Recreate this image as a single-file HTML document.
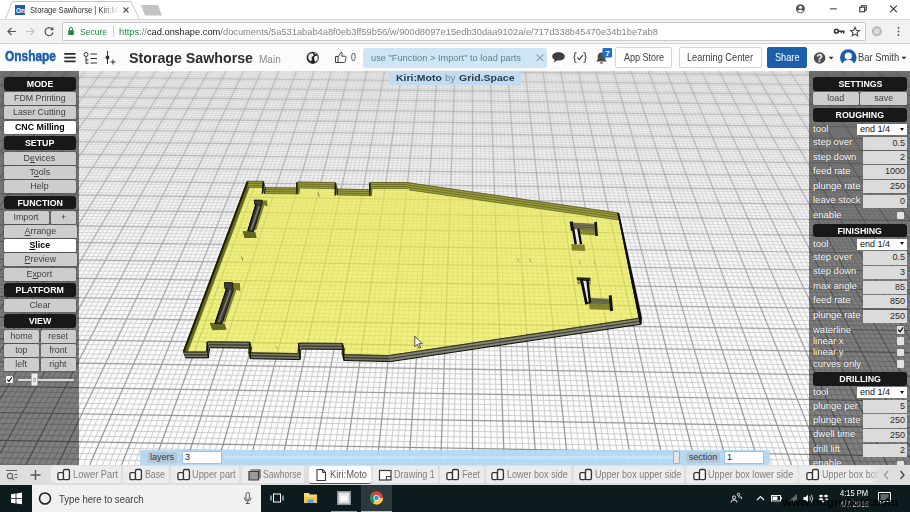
<!DOCTYPE html>
<html>
<head>
<meta charset="utf-8">
<title>Storage Sawhorse | Kiri:Moto</title>
<style>
html,body{margin:0;padding:0;}
body{width:910px;height:512px;overflow:hidden;position:relative;background:#fff;font-family:"Liberation Sans",sans-serif;}
.abs{position:absolute;}
/* ---------- browser chrome ---------- */
#tabstrip{left:0;top:0;width:910px;height:19px;background:#fff;}
#toolbar{left:0;top:19px;width:910px;height:25px;background:#f2f2f2;border-top:1px solid #d8d8d8;border-bottom:1px solid #d4d4d4;box-sizing:border-box;}
#urlbox{left:62px;top:22px;width:804px;height:19px;background:#fff;border:1px solid #c9c9c9;border-radius:2px;box-sizing:border-box;}
.url{left:79px;top:25px;font-size:10.5px;line-height:13px;white-space:nowrap;color:#8a8a8a;letter-spacing:-0.1px;}
/* ---------- onshape header ---------- */
#oshead{left:0;top:44px;width:910px;height:26px;background:#fcfcfc;}
.obtn{top:47px;height:21px;box-sizing:border-box;border:1px solid #d5d5d5;border-radius:2px;background:#fff;color:#444;font-size:10px;line-height:19px;text-align:center;white-space:nowrap;}
/* ---------- viewport ---------- */
#view{left:0;top:70px;width:910px;height:395px;background:#fff;overflow:hidden;}
.panel{background:rgba(0,0,0,0.50);}
.hd{position:absolute;background:#181818;border-radius:3px;color:#fff;font-weight:bold;font-size:9.4px;text-align:center;height:13.8px;line-height:14.2px;letter-spacing:0;}
.bt{position:absolute;background:#cdcdcd;border-radius:1.5px;color:#404040;font-size:9.2px;text-align:center;height:13px;line-height:13.1px;margin-top:-0.15px;box-shadow:0 0 0 0.5px rgba(60,60,60,0.55);}
.bt.sel{background:#fff;color:#000;}
.sx{display:inline-block;transform-origin:50% 50%;}
.lb{position:absolute;left:813px;color:#fff;font-size:9.5px;line-height:12px;white-space:nowrap;text-shadow:0 0 1px #333;}
.in{position:absolute;left:863px;width:44px;height:13.3px;background:#dbdbdb;color:#2a2a2a;font-size:9px;line-height:13.6px;text-align:right;box-sizing:border-box;padding-right:2px;}
.sl{position:absolute;left:857px;width:49.7px;height:11px;background:#fff;color:#111;font-size:9px;line-height:11.2px;box-sizing:border-box;padding-left:3px;}
.cb{position:absolute;left:897px;width:7.4px;height:7.4px;background:#e2e2e2;border-radius:1px;}
/* ---------- onshape tab bar ---------- */
#ostabs{left:0;top:465px;width:910px;height:20px;background:#dedede;}
.ot{position:absolute;top:466.3px;height:16.6px;background:#ececec;border-radius:2.5px;color:#767676;font-size:10.5px;line-height:18px;white-space:nowrap;box-sizing:border-box;}
.ot span{position:absolute;top:0;}
/* ---------- taskbar ---------- */
#taskbar{left:0;top:485px;width:910px;height:27px;background:#0b1b1e;}
</style>
</head>
<body>

<!-- ================= BROWSER TAB STRIP ================= -->
<div id="tabstrip" class="abs"></div>
<svg class="abs" style="left:0;top:0" width="910" height="20" viewBox="0 0 910 20">
  <path d="M0 19.5H5.5L12 1.5H131L139.5 19.5H910" fill="none" stroke="#c8c8c8" stroke-width="1"/>
  <path d="M141 5H158L162 15.5H145Z" fill="#c4c4c4"/>
  <rect x="15" y="5" width="10" height="10" fill="#1b5faa"/>
  <text x="16" y="12.8" font-size="6.5" font-weight="bold" fill="#fff" font-family="Liberation Sans">On.</text>
  <path d="M123.5 7.5L128.5 12.5M128.5 7.5L123.5 12.5" stroke="#555" stroke-width="1.1"/>
  <!-- window controls -->
  <circle cx="800.4" cy="8.7" r="4.5" fill="#5a5a5a"/>
  <circle cx="800.4" cy="7.3" r="1.5" fill="#fff"/><path d="M797.4 11.3Q800.4 8.2 803.4 11.3Q800.4 13.6 797.4 11.3Z" fill="#fff"/>
  <path d="M829.9 8.8H836.8" stroke="#5a5a5a" stroke-width="1.2"/>
  <rect x="859.8" y="7.2" width="4.8" height="4.6" fill="none" stroke="#333" stroke-width="1.1"/>
  <path d="M861.5 7V5.7H866.3V10.3H865" fill="none" stroke="#333" stroke-width="1.1"/>
  <path d="M890.2 5.6L896.8 12.2M896.8 5.6L890.2 12.2" stroke="#333" stroke-width="1.1"/>
</svg>
<div class="abs" style="left:104px;top:2px;width:18px;height:16px;background:linear-gradient(90deg,rgba(255,255,255,0),#fff 80%);"></div>

<!-- ================= TOOLBAR ================= -->
<div id="toolbar" class="abs"></div>
<div id="urlbox" class="abs"></div>
<svg class="abs" style="left:0;top:19px" width="910" height="25" viewBox="0 19 910 25">
  <path d="M16 31.5H8M11.5 28L8 31.5L11.5 35" fill="none" stroke="#555" stroke-width="1.2"/>
  <path d="M26 31.5H34M30.5 28L34 31.5L30.5 35" fill="none" stroke="#c4c4c4" stroke-width="1.2"/>
  <path d="M52.3 29.2A4 4 0 1 0 53 32.5" fill="none" stroke="#555" stroke-width="1.2"/>
  <path d="M53.4 26.8V30.2H50" fill="#555"/>
  <!-- lock -->
  <rect x="68.2" y="30.3" width="5.6" height="4.7" rx="0.6" fill="#1a8a3c"/>
  <path d="M69.4 30.5V29A1.6 1.6 0 0 1 72.6 29V30.5" fill="none" stroke="#1a8a3c" stroke-width="1"/>
  <path d="M113.5 26V37" stroke="#cfcfcf" stroke-width="1"/>
  <!-- key -->
  <circle cx="836.4" cy="31.2" r="1.9" fill="none" stroke="#333" stroke-width="1.5"/>
  <path d="M838.2 31.2H843.8V33.6M841.4 31.2V33.2" fill="none" stroke="#333" stroke-width="1.5"/>
  <!-- star -->
  <path d="M855 27.2L856.3 30.2L859.5 30.5L857.1 32.6L857.8 35.8L855 34.1L852.2 35.8L852.9 32.6L850.5 30.5L853.7 30.2Z" fill="none" stroke="#444" stroke-width="1.1"/>
  <!-- ext -->
  <circle cx="876.8" cy="31.3" r="5" fill="#b9b9b9"/><circle cx="876.8" cy="31.3" r="3" fill="#dcdcdc"/>
  <circle cx="898.5" cy="28" r="0.9" fill="#555"/><circle cx="898.5" cy="31.5" r="0.9" fill="#555"/><circle cx="898.5" cy="35" r="0.9" fill="#555"/>
</svg>
<div class="abs" style="left:79.70px;top:25.91px;font-size:9.60px;line-height:11.52px;font-weight:normal;color:#1a8a3c;white-space:nowrap;transform:scaleX(0.8913);transform-origin:0 0;">Secure</div>
<div class="abs" style="left:118.70px;top:25.91px;font-size:9.60px;line-height:11.52px;font-weight:normal;color:#858585;white-space:nowrap;transform:scaleX(0.9696);transform-origin:0 0;"><span style="color:#1a8a3c">https</span>://<span style="color:#222">cad.onshape.com</span>/documents/5a531abab4a8f0eb3ff59b56/w/900d8097e15edb30daa9102a/e/717d338b45470e34b1be7ab8</div>

<!-- ================= ONSHAPE HEADER ================= -->
<div id="oshead" class="abs"></div>
<svg class="abs" style="left:0;top:44px" width="910" height="26" viewBox="0 44 910 26">
  <path d="M64.3 53.9H75.6M64.3 57.6H75.6M64.3 61.4H75.6" stroke="#2a2a2a" stroke-width="1.8"/>
  <!-- tree icon -->
  <circle cx="86" cy="54.5" r="2" fill="none" stroke="#333" stroke-width="1"/>
  <path d="M86 56.5V63.5M86 60H88.5M86 63.2H88.5M90.5 54H97M90.5 58.5H97M90.5 63H97" fill="none" stroke="#333" stroke-width="1"/>
  <!-- feature icon -->
  <path d="M107.5 51V64" stroke="#333" stroke-width="1"/><circle cx="107.5" cy="57.5" r="1.9" fill="#333"/>
  <path d="M110.5 62H115.5M113 59.5V64.5" stroke="#333" stroke-width="1"/>
  <!-- globe -->
  <circle cx="312.7" cy="57.8" r="6.1" fill="#262626"/>
  <path d="M308.6 55Q310.5 52.8 313 53.4L313.8 55.5L311.5 57L312 59.8L310.3 61.6L308.2 58.2Z M314.6 56.2L317.4 55.6L317.8 59.5L315.5 62L314 59Z M314.2 52.6L316.4 53.6L315.2 54.6Z" fill="#f4f4f4"/>
  <!-- thumbs up -->
  <path d="M335.5 56.5H338V62.5H335.5ZM338 57L341 52.3Q342.6 52.4 342.2 54.2L341.7 56.2H345.3Q346.3 56.4 346.1 57.6L345.1 61.6Q344.8 62.5 343.8 62.5H338" fill="none" stroke="#444" stroke-width="1"/>
  <!-- chat bubble -->
  <path d="M558.5 52.3C562.2 52.3 564.8 54 564.8 56.4C564.8 58.8 562.2 60.5 558.5 60.5C557.9 60.5 557.3 60.5 556.8 60.4L553.8 62.6L554.6 59.6C553 58.9 552.2 57.8 552.2 56.4C552.2 54 554.8 52.3 558.5 52.3Z" fill="#3d3d3d"/>
  <!-- {check} -->
  <path d="M576.5 52.5Q574.7 52.5 574.7 54.3V56Q574.7 57.5 573.4 57.5Q574.7 57.5 574.7 59V60.7Q574.7 62.5 576.5 62.5M583.5 52.5Q585.3 52.5 585.3 54.3V56Q585.3 57.5 586.6 57.5Q585.3 57.5 585.3 59V60.7Q585.3 62.5 583.5 62.5" fill="none" stroke="#444" stroke-width="1.1"/>
  <path d="M577.3 57.6L579.3 59.7L582.8 55.2" fill="none" stroke="#444" stroke-width="1.2"/>
  <!-- bell -->
  <path d="M601.5 52.5C604 52.5 605.3 54.3 605.3 56.8V59.6L606.8 61.4H596.2L597.7 59.6V56.8C597.7 54.3 599 52.5 601.5 52.5Z" fill="#4a4a4a"/>
  <path d="M600 62.2H603A1.5 1.5 0 0 1 600 62.2Z" fill="#4a4a4a"/>
  <rect x="602.5" y="48" width="9.5" height="9.5" rx="1.2" fill="#1f6fc4"/>
  <text x="605.2" y="55.8" font-size="8" font-weight="bold" fill="#fff" font-family="Liberation Sans">7</text>
  <!-- help -->
  <circle cx="819.6" cy="58" r="5.8" fill="#505050"/>
  <text x="816.6" y="61.6" font-size="10" font-weight="bold" fill="#fff" font-family="Liberation Sans">?</text>
  <path d="M828.6 56.8H833.6L831.1 59.6Z" fill="#333"/>
  <!-- avatar -->
  <circle cx="848.3" cy="57.5" r="8.3" fill="#1b5faa"/>
  <circle cx="848.3" cy="56" r="3.6" fill="#fff"/>
  <path d="M842.2 65.8Q842.6 60 848.3 60Q854 60 854.4 65.8Z" fill="#fff"/>
  <path d="M901.5 56.8H906.5L904 59.6Z" fill="#333"/>
</svg>
<div class="abs" style="left:29px;top:2px;width:91px;height:16px;overflow:hidden;-webkit-mask-image:linear-gradient(90deg,#000 80%,rgba(0,0,0,0) 99%);mask-image:linear-gradient(90deg,#000 80%,rgba(0,0,0,0) 99%);"><div class="abs" style="left:0.70px;top:2.60px;font-size:9.30px;line-height:11.16px;font-weight:normal;color:#2e2e2e;white-space:nowrap;transform:scaleX(0.8141);transform-origin:0 0;">Storage Sawhorse | Kiri:Moto</div></div>
<div class="abs" style="left:4.60px;top:47.41px;font-size:15.20px;line-height:18.24px;font-weight:bold;color:#1b5faa;white-space:nowrap;transform:scaleX(0.7846);transform-origin:0 0;-webkit-text-stroke:0.55px #1b5faa;">Onshape</div>
<div class="abs" style="left:128.60px;top:50.17px;font-size:14.40px;line-height:17.28px;font-weight:bold;color:#2e2e2e;white-space:nowrap;transform:scaleX(0.9876);transform-origin:0 0;">Storage Sawhorse</div>
<div class="abs" style="left:259.10px;top:53.94px;font-size:10.00px;line-height:12.00px;font-weight:normal;color:#8c8c8c;white-space:nowrap;transform:scaleX(1.0052);transform-origin:0 0;">Main</div>
<div class="abs" style="left:351.10px;top:51.55px;font-size:10.20px;line-height:12.24px;font-weight:normal;color:#444;white-space:nowrap;transform:scaleX(0.8639);transform-origin:0 0;">0</div>
<div class="abs" style="left:363.3px;top:48.3px;width:183.5px;height:19.5px;background:#cfe5f4;border-radius:3px;"></div>
<div class="abs" style="left:370.80px;top:52.03px;font-size:9.90px;line-height:11.88px;font-weight:normal;color:#5c7f99;white-space:nowrap;transform:scaleX(0.9381);transform-origin:0 0;">use "Function &gt; Import" to load parts</div>
<svg class="abs" style="left:534.5px;top:53px" width="10" height="10"><path d="M1.5 1.6L8.3 7.8M8.3 1.6L1.5 7.8" stroke="#7ea0b8" stroke-width="1.1"/></svg>
<div class="abs obtn" style="left:614.7px;width:57.7px;"></div>
<div class="abs obtn" style="left:678.7px;width:83px;"></div>
<div class="abs obtn" style="left:767px;width:40px;background:#1b5faa;border-color:#1b5faa;"></div>
<div class="abs" style="left:624.00px;top:50.97px;font-size:10.60px;line-height:12.72px;font-weight:normal;color:#3d3d3d;white-space:nowrap;transform:scaleX(0.8509);transform-origin:0 0;">App Store</div>
<div class="abs" style="left:686.60px;top:50.97px;font-size:10.60px;line-height:12.72px;font-weight:normal;color:#3d3d3d;white-space:nowrap;transform:scaleX(0.8686);transform-origin:0 0;">Learning Center</div>
<div class="abs" style="left:774.80px;top:50.97px;font-size:10.60px;line-height:12.72px;font-weight:normal;color:#fff;white-space:nowrap;transform:scaleX(0.8663);transform-origin:0 0;">Share</div>
<div class="abs" style="left:858.40px;top:50.97px;font-size:10.60px;line-height:12.72px;font-weight:normal;color:#3d3d3d;white-space:nowrap;transform:scaleX(0.8857);transform-origin:0 0;">Bar Smith</div>

<!-- ================= VIEWPORT ================= -->
<div id="view" class="abs">
<svg class="abs" style="left:0;top:0" width="910" height="395" viewBox="0 70 910 395">
  <defs>
    <linearGradient id="gm" gradientUnits="userSpaceOnUse" x1="0" y1="70" x2="0" y2="465"><stop offset="0" stop-color="#d0d0d0"/><stop offset="1" stop-color="#c8c8c8"/></linearGradient>
    <linearGradient id="gM" gradientUnits="userSpaceOnUse" x1="0" y1="70" x2="0" y2="465"><stop offset="0" stop-color="#a8a8a8"/><stop offset="1" stop-color="#8a8a8a"/></linearGradient>
  </defs>
  <defs>
    <filter id="bl" x="0" y="70" width="910" height="395" filterUnits="userSpaceOnUse"><feGaussianBlur stdDeviation="0.9"/></filter>
    <filter id="bl2" x="0" y="70" width="910" height="395" filterUnits="userSpaceOnUse"><feGaussianBlur stdDeviation="0.3"/></filter>
    <linearGradient id="mg" gradientUnits="userSpaceOnUse" x1="0" y1="70" x2="0" y2="465"><stop offset="0" stop-color="#585858"/><stop offset="0.3" stop-color="#868686"/><stop offset="1" stop-color="#e8e8e8"/></linearGradient>
    <mask id="mk" maskUnits="userSpaceOnUse" x="0" y="70" width="910" height="395"><rect x="0" y="70" width="910" height="395" fill="url(#mg)"/></mask>
    <g id="grid">
      <path d="M861.3 70.0L910.0 70.5M671.8 70.0L910.0 72.3M482.3 70.0L910.0 74.1M103.3 70.0L910.0 77.9M0.0 70.8L910.0 79.7M0.0 72.7L910.0 81.6M0.0 74.6L910.0 83.5M0.0 78.4L910.0 87.4M0.0 80.3L910.0 89.4M0.0 82.2L910.0 91.3M0.0 84.2L910.0 93.3M0.0 88.1L910.0 97.4M0.0 90.1L910.0 99.4M0.0 92.2L910.0 101.4M0.0 94.2L910.0 103.5M0.0 98.3L910.0 107.7M0.0 100.4L910.0 109.8M0.0 102.5L910.0 111.9M0.0 104.6L910.0 114.1M-0.0 108.9L910.0 118.5M0.0 111.0L910.0 120.7M0.0 113.2L910.0 122.9M0.0 115.4L910.0 125.1M0.0 119.9L910.0 129.7M0.0 122.1L910.0 132.0M0.0 124.4L910.0 134.3M-0.0 126.7L910.0 136.6M0.0 131.4L910.0 141.4M0.0 133.7L910.0 143.8M0.0 136.1L910.0 146.2M0.0 138.5L910.0 148.7M0.0 143.4L910.0 153.6M0.0 145.8L910.0 156.1M0.0 148.3L910.0 158.6M0.0 150.8L910.0 161.2M0.0 155.9L910.0 166.4M0.0 158.5L910.0 169.0M-0.0 161.1L910.0 171.6M0.0 163.7L910.0 174.3M0.0 169.0L910.0 179.7M0.0 171.7L910.0 182.5M0.0 174.5L910.0 185.2M0.0 177.2L910.0 188.0M0.0 182.8L910.0 193.7M0.0 185.6L910.0 196.6M0.0 188.4L910.0 199.5M0.0 191.3L910.0 202.4M0.0 197.2L910.0 208.4M0.0 200.1L910.0 211.4M0.0 203.1L910.0 214.4M0.0 206.1L910.0 217.5M0.0 212.3L910.0 223.8M0.0 215.4L910.0 226.9M0.0 218.5L910.0 230.1M0.0 221.7L910.0 233.4M0.0 228.1L910.0 239.9M0.0 231.4L910.0 243.3M0.0 234.7L910.0 246.6M0.0 238.1L910.0 250.0M0.0 244.8L910.0 256.9M0.0 248.3L910.0 260.4M0.0 251.8L910.0 264.0M0.0 255.3L910.0 267.6M0.0 262.4L910.0 274.8M0.0 266.1L910.0 278.5M0.0 269.7L910.0 282.3M0.0 273.5L910.0 286.1M0.0 281.0L910.0 293.7M0.0 284.8L910.0 297.7M0.0 288.7L910.0 301.6M0.0 292.6L910.0 305.6M0.0 300.6L910.0 313.7M0.0 304.7L910.0 317.8M0.0 308.8L910.0 322.0M0.0 312.9L910.0 326.2M0.0 321.3L910.0 334.8M0.0 325.6L910.0 339.2M0.0 330.0L910.0 343.6M0.0 334.4L910.0 348.1M0.0 343.3L910.0 357.2M0.0 347.9L910.0 361.9M0.0 352.5L910.0 366.6M0.0 357.2L910.0 371.3M0.0 366.7L910.0 381.0M0.0 371.5L910.0 385.9M-0.0 376.4L910.0 390.9M0.0 381.4L910.0 396.0M-0.0 391.5L910.0 406.3M0.0 396.6L910.0 411.5M0.0 401.9L910.0 416.8M0.0 407.1L910.0 422.2M0.0 417.9L910.0 433.2M0.0 423.4L910.0 438.8M0.0 429.0L910.0 444.5M0.0 434.7L910.0 450.2M0.0 446.2L910.0 462.0M0.0 452.1L741.1 465.0M0.0 458.0L397.0 465.0M0.0 464.1L52.8 465.0" fill="none" stroke="url(#gm)" stroke-width="1"/>
      <path d="M1.6 70.0L0.0 71.7M5.2 70.0L0.0 75.3M8.7 70.0L0.0 79.1M12.2 70.0L0.0 82.8M19.2 70.0L0.0 90.5M22.7 70.0L0.0 94.5M26.2 70.0L0.0 98.5M29.8 70.0L0.0 102.5M36.8 70.0L0.0 110.9M40.3 70.0L0.0 115.1M43.8 70.0L0.0 119.5M47.3 70.0L0.0 123.9M54.4 70.0L0.0 132.9M57.9 70.0L0.0 137.5M61.4 70.0L0.0 142.3M64.9 70.0L0.0 147.1M71.9 70.0L0.0 156.9M75.4 70.0L0.0 162.0M78.9 70.0L0.0 167.1M82.5 70.0L0.0 172.3M89.5 70.0L-0.0 183.1M93.0 70.0L0.0 188.6M96.5 70.0L0.0 194.2M100.0 70.0L0.0 200.0M107.1 70.0L0.0 211.8M110.6 70.0L0.0 217.9M114.1 70.0L0.0 224.1M117.6 70.0L0.0 230.4M124.6 70.0L0.0 243.4M128.1 70.0L0.0 250.1M131.7 70.0L0.0 257.0M135.2 70.0L0.0 263.9M142.2 70.0L0.0 278.4M145.7 70.0L0.0 285.8M149.2 70.0L0.0 293.4M152.7 70.0L0.0 301.2M159.8 70.0L0.0 317.3M163.3 70.0L0.0 325.6M166.8 70.0L0.0 334.1M170.3 70.0L0.0 342.8M177.3 70.0L0.0 360.8M180.9 70.0L0.0 370.1M184.4 70.0L-0.0 379.7M187.9 70.0L0.0 389.5M194.9 70.0L0.0 409.8M198.4 70.0L0.0 420.4M201.9 70.0L0.0 431.2M205.4 70.0L0.0 442.4M212.5 70.0L0.3 465.0M216.0 70.0L6.6 465.0M219.5 70.0L13.0 465.0M223.0 70.0L19.4 465.0M230.0 70.0L32.2 465.0M233.6 70.0L38.6 465.0M237.1 70.0L44.9 465.0M240.6 70.0L51.3 465.0M247.6 70.0L64.1 465.0M251.1 70.0L70.5 465.0M254.6 70.0L76.8 465.0M258.2 70.0L83.2 465.0M265.2 70.0L96.0 465.0M268.7 70.0L102.4 465.0M272.2 70.0L108.8 465.0M275.7 70.0L115.1 465.0M282.8 70.0L127.9 465.0M286.3 70.0L134.3 465.0M289.8 70.0L140.7 465.0M293.3 70.0L147.0 465.0M300.3 70.0L159.8 465.0M303.8 70.0L166.2 465.0M307.3 70.0L172.6 465.0M310.9 70.0L178.9 465.0M317.9 70.0L191.7 465.0M321.4 70.0L198.1 465.0M324.9 70.0L204.5 465.0M328.4 70.0L210.9 465.0M335.5 70.0L223.6 465.0M339.0 70.0L230.0 465.0M342.5 70.0L236.4 465.0M346.0 70.0L242.8 465.0M353.0 70.0L255.5 465.0M356.5 70.0L261.9 465.0M360.1 70.0L268.3 465.0M363.6 70.0L274.7 465.0M370.6 70.0L287.4 465.0M374.1 70.0L293.8 465.0M377.6 70.0L300.2 465.0M381.1 70.0L306.6 465.0M388.2 70.0L319.3 465.0M391.7 70.0L325.7 465.0M395.2 70.0L332.1 465.0M398.7 70.0L338.5 465.0M405.7 70.0L351.3 465.0M409.3 70.0L357.6 465.0M412.8 70.0L364.0 465.0M416.3 70.0L370.4 465.0M423.3 70.0L383.2 465.0M426.8 70.0L389.5 465.0M430.3 70.0L395.9 465.0M433.8 70.0L402.3 465.0M440.9 70.0L415.1 465.0M444.4 70.0L421.4 465.0M447.9 70.0L427.8 465.0M451.4 70.0L434.2 465.0M458.4 70.0L447.0 465.0M462.0 70.0L453.4 465.0M465.5 70.0L459.7 465.0M469.0 70.0L466.1 465.0M476.0 70.0L478.9 465.0M479.5 70.0L485.3 465.0M483.0 70.0L491.6 465.0M486.6 70.0L498.0 465.0M493.6 70.0L510.8 465.0M497.1 70.0L517.2 465.0M500.6 70.0L523.6 465.0M504.1 70.0L529.9 465.0M511.2 70.0L542.7 465.0M514.7 70.0L549.1 465.0M518.2 70.0L555.5 465.0M521.7 70.0L561.8 465.0M528.7 70.0L574.6 465.0M532.2 70.0L581.0 465.0M535.7 70.0L587.4 465.0M539.3 70.0L593.7 465.0M546.3 70.0L606.5 465.0M549.8 70.0L612.9 465.0M553.3 70.0L619.3 465.0M556.8 70.0L625.7 465.0M563.9 70.0L638.4 465.0M567.4 70.0L644.8 465.0M570.9 70.0L651.2 465.0M574.4 70.0L657.6 465.0M581.4 70.0L670.3 465.0M584.9 70.0L676.7 465.0M588.5 70.0L683.1 465.0M592.0 70.0L689.5 465.0M599.0 70.0L702.2 465.0M602.5 70.0L708.6 465.0M606.0 70.0L715.0 465.0M609.5 70.0L721.4 465.0M616.6 70.0L734.1 465.0M620.1 70.0L740.5 465.0M623.6 70.0L746.9 465.0M627.1 70.0L753.3 465.0M634.1 70.0L766.1 465.0M637.7 70.0L772.4 465.0M641.2 70.0L778.8 465.0M644.7 70.0L785.2 465.0M651.7 70.0L798.0 465.0M655.2 70.0L804.3 465.0M658.7 70.0L810.7 465.0M662.2 70.0L817.1 465.0M669.3 70.0L829.9 465.0M672.8 70.0L836.2 465.0M676.3 70.0L842.6 465.0M679.8 70.0L849.0 465.0M686.8 70.0L861.8 465.0M690.4 70.0L868.2 465.0M693.9 70.0L874.5 465.0M697.4 70.0L880.9 465.0M704.4 70.0L893.7 465.0M707.9 70.0L900.1 465.0M711.4 70.0L906.4 465.0M715.0 70.0L910.0 459.4M722.0 70.0L910.0 434.8M725.5 70.0L910.0 423.0M729.0 70.0L910.0 411.5M732.5 70.0L910.0 400.3M739.6 70.0L910.0 378.9M743.1 70.0L910.0 368.6M746.6 70.0L910.0 358.6M750.1 70.0L910.0 348.8M757.1 70.0L910.0 330.0M760.6 70.0L910.0 320.9M764.1 70.0L910.0 312.0M767.7 70.0L910.0 303.4M774.7 70.0L910.0 286.7M778.2 70.0L910.0 278.7M781.7 70.0L910.0 270.8M785.2 70.0L910.0 263.1M792.3 70.0L910.0 248.2M795.8 70.0L910.0 241.0M799.3 70.0L910.0 234.0M802.8 70.0L910.0 227.1M809.8 70.0L910.0 213.7M813.3 70.0L910.0 207.3M816.9 70.0L910.0 200.9M820.4 70.0L910.0 194.7M827.4 70.0L910.0 182.7M830.9 70.0L910.0 176.8M834.4 70.0L910.0 171.1M837.9 70.0L910.0 165.4M845.0 70.0L910.0 154.5M848.5 70.0L910.0 149.2M852.0 70.0L910.0 144.0M855.5 70.0L910.0 138.9M862.5 70.0L910.0 128.9M866.1 70.0L910.0 124.1M869.6 70.0L910.0 119.3M873.1 70.0L910.0 114.6M880.1 70.0L910.0 105.5M883.6 70.0L910.0 101.1M887.1 70.0L910.0 96.7M890.6 70.0L910.0 92.4M897.7 70.0L910.0 84.0M901.2 70.0L910.0 79.9M904.7 70.0L910.0 75.9M908.2 70.0L910.0 72.0" fill="none" stroke="url(#gm)" stroke-width="1"/>
      <path d="M292.8 70.0L910.0 76.0M0.0 76.5L910.0 85.5M0.0 86.2L910.0 95.3M0.0 96.2L910.0 105.6M0.0 106.7L910.0 116.3M-0.0 117.6L910.0 127.4M0.0 129.0L910.0 139.0M0.0 140.9L910.0 151.1M0.0 153.4L910.0 163.8M-0.0 166.4L910.0 177.0M0.0 180.0L910.0 190.9M0.0 194.2L910.0 205.4M0.0 209.2L910.0 220.6M0.0 224.9L910.0 236.6M0.0 241.4L910.0 253.5M0.0 258.8L910.0 271.2M0.0 277.2L910.0 289.9M0.0 296.6L910.0 309.6M0.0 317.1L910.0 330.5M0.0 338.8L910.0 352.6M0.0 361.9L910.0 376.1M-0.0 386.4L910.0 401.1M0.0 412.5L910.0 427.7M-0.0 440.4L910.0 456.1" fill="none" stroke="url(#gM)" stroke-width="1.2"/>
      <path d="M15.7 70.0L0.0 86.6M33.3 70.0L0.0 106.7M50.8 70.0L0.0 128.4M68.4 70.0L0.0 151.9M86.0 70.0L0.0 177.7M103.5 70.0L0.0 205.8M121.1 70.0L0.0 236.8M138.7 70.0L0.0 271.1M156.3 70.0L-0.0 309.1M173.8 70.0L0.0 351.7M191.4 70.0L0.0 399.5M209.0 70.0L-0.0 453.8M226.5 70.0L25.8 465.0M244.1 70.0L57.7 465.0M261.7 70.0L89.6 465.0M279.2 70.0L121.5 465.0M296.8 70.0L153.4 465.0M314.4 70.0L185.3 465.0M331.9 70.0L217.2 465.0M349.5 70.0L249.1 465.0M367.1 70.0L281.1 465.0M384.7 70.0L313.0 465.0M402.2 70.0L344.9 465.0M419.8 70.0L376.8 465.0M437.4 70.0L408.7 465.0M454.9 70.0L440.6 465.0M472.5 70.0L472.5 465.0M490.1 70.0L504.4 465.0M507.6 70.0L536.3 465.0M525.2 70.0L568.2 465.0M542.8 70.0L600.1 465.0M560.3 70.0L632.0 465.0M577.9 70.0L663.9 465.0M595.5 70.0L695.9 465.0M613.1 70.0L727.8 465.0M630.6 70.0L759.7 465.0M648.2 70.0L791.6 465.0M665.8 70.0L823.5 465.0M683.3 70.0L855.4 465.0M700.9 70.0L887.3 465.0M718.5 70.0L910.0 446.9M736.0 70.0L910.0 389.5M753.6 70.0L910.0 339.3M771.2 70.0L910.0 295.0M788.7 70.0L910.0 255.6M806.3 70.0L910.0 220.3M823.9 70.0L910.0 188.6M841.5 70.0L910.0 159.9M859.0 70.0L910.0 133.8M876.6 70.0L910.0 110.0M894.2 70.0L910.0 88.2" fill="none" stroke="url(#gM)" stroke-width="1.2"/>
    </g>
  </defs>
  <rect x="0" y="70" width="910" height="395" fill="#fff"/>
  <use href="#grid" filter="url(#bl)"/>
  <g mask="url(#mk)"><rect x="0" y="70" width="910" height="395" fill="#fff"/><use href="#grid" filter="url(#bl2)"/></g>

<polygon points="247.2,181.4 263.4,181.4 262.2,187.6 296.9,187.9 297.6,182.0 335.5,182.7 335.0,189.0 369.6,189.7 370.0,182.6 406.6,182.6 617.8,212.9 639.2,318.2 388.5,355.6 341.9,354.5 342.7,343.4 298.8,343.1 297.9,353.6 248.2,352.7 250.0,342.2 207.8,341.7 206.0,351.9 183.2,351.9" fill="#ebeb41" fill-opacity="0.65"/>
<g>
<polygon points="247.2,181.4 263.4,181.4 265.4,187.4 249.2,187.4" fill="#94963a" fill-opacity="0.92"/>
<path d="M247.2 181.4L263.4 181.4" stroke="#5a5e18" stroke-opacity="0.9" stroke-width="0.8" fill="none"/>
<path d="M247.9 183.4L264.1 183.4" stroke="#5a5e18" stroke-opacity="0.9" stroke-width="0.8" fill="none"/>
<path d="M248.5 185.4L264.7 185.4" stroke="#5a5e18" stroke-opacity="0.9" stroke-width="0.8" fill="none"/>
<path d="M249.2 187.4L265.4 187.4" stroke="#5a5e18" stroke-opacity="0.9" stroke-width="0.8" fill="none"/>
<polygon points="262.2,187.6 296.9,187.9 298.9,193.9 264.2,193.6" fill="#94963a" fill-opacity="0.92"/>
<path d="M262.2 187.6L296.9 187.9" stroke="#5a5e18" stroke-opacity="0.9" stroke-width="0.8" fill="none"/>
<path d="M262.9 189.6L297.6 189.9" stroke="#5a5e18" stroke-opacity="0.9" stroke-width="0.8" fill="none"/>
<path d="M263.5 191.6L298.2 191.9" stroke="#5a5e18" stroke-opacity="0.9" stroke-width="0.8" fill="none"/>
<path d="M264.2 193.6L298.9 193.9" stroke="#5a5e18" stroke-opacity="0.9" stroke-width="0.8" fill="none"/>
<polygon points="296.9,187.9 297.6,182.0 299.6,188.0 298.9,193.9" fill="#94963a" fill-opacity="0.92"/>
<path d="M296.9 187.9L297.6 182.0" stroke="#5a5e18" stroke-opacity="0.9" stroke-width="0.8" fill="none"/>
<path d="M297.6 189.9L298.3 184.0" stroke="#5a5e18" stroke-opacity="0.9" stroke-width="0.8" fill="none"/>
<path d="M298.2 191.9L298.9 186.0" stroke="#5a5e18" stroke-opacity="0.9" stroke-width="0.8" fill="none"/>
<path d="M298.9 193.9L299.6 188.0" stroke="#5a5e18" stroke-opacity="0.9" stroke-width="0.8" fill="none"/>
<polygon points="297.6,182.0 335.5,182.7 337.5,188.7 299.6,188.0" fill="#94963a" fill-opacity="0.92"/>
<path d="M297.6 182.0L335.5 182.7" stroke="#5a5e18" stroke-opacity="0.9" stroke-width="0.8" fill="none"/>
<path d="M298.3 184.0L336.2 184.7" stroke="#5a5e18" stroke-opacity="0.9" stroke-width="0.8" fill="none"/>
<path d="M298.9 186.0L336.8 186.7" stroke="#5a5e18" stroke-opacity="0.9" stroke-width="0.8" fill="none"/>
<path d="M299.6 188.0L337.5 188.7" stroke="#5a5e18" stroke-opacity="0.9" stroke-width="0.8" fill="none"/>
<polygon points="335.0,189.0 369.6,189.7 371.6,195.7 337.0,195.0" fill="#94963a" fill-opacity="0.92"/>
<path d="M335.0 189.0L369.6 189.7" stroke="#5a5e18" stroke-opacity="0.9" stroke-width="0.8" fill="none"/>
<path d="M335.7 191.0L370.3 191.7" stroke="#5a5e18" stroke-opacity="0.9" stroke-width="0.8" fill="none"/>
<path d="M336.3 193.0L370.9 193.7" stroke="#5a5e18" stroke-opacity="0.9" stroke-width="0.8" fill="none"/>
<path d="M337.0 195.0L371.6 195.7" stroke="#5a5e18" stroke-opacity="0.9" stroke-width="0.8" fill="none"/>
<polygon points="369.6,189.7 370.0,182.6 372.0,188.6 371.6,195.7" fill="#94963a" fill-opacity="0.92"/>
<path d="M369.6 189.7L370.0 182.6" stroke="#5a5e18" stroke-opacity="0.9" stroke-width="0.8" fill="none"/>
<path d="M370.3 191.7L370.7 184.6" stroke="#5a5e18" stroke-opacity="0.9" stroke-width="0.8" fill="none"/>
<path d="M370.9 193.7L371.3 186.6" stroke="#5a5e18" stroke-opacity="0.9" stroke-width="0.8" fill="none"/>
<path d="M371.6 195.7L372.0 188.6" stroke="#5a5e18" stroke-opacity="0.9" stroke-width="0.8" fill="none"/>
<polygon points="370.0,182.6 406.6,182.6 408.6,188.6 372.0,188.6" fill="#94963a" fill-opacity="0.92"/>
<path d="M370.0 182.6L406.6 182.6" stroke="#5a5e18" stroke-opacity="0.9" stroke-width="0.8" fill="none"/>
<path d="M370.7 184.6L407.3 184.6" stroke="#5a5e18" stroke-opacity="0.9" stroke-width="0.8" fill="none"/>
<path d="M371.3 186.6L407.9 186.6" stroke="#5a5e18" stroke-opacity="0.9" stroke-width="0.8" fill="none"/>
<path d="M372.0 188.6L408.6 188.6" stroke="#5a5e18" stroke-opacity="0.9" stroke-width="0.8" fill="none"/>
<polygon points="406.6,182.6 617.8,212.9 620.2,220.2 409.0,189.9" fill="#94963a" fill-opacity="0.92"/>
<path d="M406.6 182.6L617.8 212.9" stroke="#5a5e18" stroke-opacity="0.9" stroke-width="0.8" fill="none"/>
<path d="M407.4 185.0L618.6 215.3" stroke="#5a5e18" stroke-opacity="0.9" stroke-width="0.8" fill="none"/>
<path d="M408.2 187.4L619.4 217.7" stroke="#5a5e18" stroke-opacity="0.9" stroke-width="0.8" fill="none"/>
<path d="M409.0 189.9L620.2 220.2" stroke="#5a5e18" stroke-opacity="0.9" stroke-width="0.8" fill="none"/>
<polygon points="341.9,354.5 342.7,343.4 344.7,349.4 343.9,360.5" fill="#94963a" fill-opacity="0.92"/>
<path d="M341.9 354.5L342.7 343.4" stroke="#5a5e18" stroke-opacity="0.9" stroke-width="0.8" fill="none"/>
<path d="M342.6 356.5L343.4 345.4" stroke="#5a5e18" stroke-opacity="0.9" stroke-width="0.8" fill="none"/>
<path d="M343.2 358.5L344.0 347.4" stroke="#5a5e18" stroke-opacity="0.9" stroke-width="0.8" fill="none"/>
<path d="M343.9 360.5L344.7 349.4" stroke="#5a5e18" stroke-opacity="0.9" stroke-width="0.8" fill="none"/>
<polygon points="248.2,352.7 250.0,342.2 252.0,348.2 250.2,358.7" fill="#94963a" fill-opacity="0.92"/>
<path d="M248.2 352.7L250.0 342.2" stroke="#5a5e18" stroke-opacity="0.9" stroke-width="0.8" fill="none"/>
<path d="M248.9 354.7L250.7 344.2" stroke="#5a5e18" stroke-opacity="0.9" stroke-width="0.8" fill="none"/>
<path d="M249.5 356.7L251.3 346.2" stroke="#5a5e18" stroke-opacity="0.9" stroke-width="0.8" fill="none"/>
<path d="M250.2 358.7L252.0 348.2" stroke="#5a5e18" stroke-opacity="0.9" stroke-width="0.8" fill="none"/>
<polygon points="183.2,351.9 247.2,181.4 249.2,187.4 185.2,357.9" fill="#66681f" fill-opacity="0.92"/>
<path d="M183.2 351.9L247.2 181.4" stroke="#5a5e18" stroke-opacity="0.9" stroke-width="0.8" fill="none"/>
<path d="M183.9 353.9L247.9 183.4" stroke="#5a5e18" stroke-opacity="0.9" stroke-width="0.8" fill="none"/>
<path d="M184.5 355.9L248.5 185.4" stroke="#5a5e18" stroke-opacity="0.9" stroke-width="0.8" fill="none"/>
<path d="M185.2 357.9L249.2 187.4" stroke="#5a5e18" stroke-opacity="0.9" stroke-width="0.8" fill="none"/>
</g>
<polygon points="261.8,200.4 267.0,200.6 267.6,206.6 262.3,204.6" fill="#6e7124" fill-opacity="0.95"/>
<polygon points="261.7,204.4 264.5,204.4 256.3,229.9 253.5,229.9" fill="#73762a" fill-opacity="0.95"/>
<polygon points="242.6,231.0 255.3,231.7 256.7,237.9 244.4,237.9" fill="#5e6120" fill-opacity="0.97"/>
<polygon points="232.5,282.9 239.8,283.1 240.4,291.1 233.0,289.1" fill="#6e7124" fill-opacity="0.95"/>
<polygon points="233.5,288.9 236.7,288.9 225.1,322.3 221.9,322.3" fill="#73762a" fill-opacity="0.95"/>
<polygon points="209.6,322.7 224.6,323.4 226.7,329.7 212.3,330.2" fill="#5e6120" fill-opacity="0.97"/>
<polygon points="571.2,244.0 584.6,244.6 585.2,251.0 571.9,250.4" fill="#7c7f2a" fill-opacity="0.95"/>
<polygon points="573.5,228.6 595.0,229.8 595.4,235.2 574.2,234.0" fill="#7c7f2a" fill-opacity="0.95"/>
<polygon points="589.0,303.6 610.0,304.6 610.4,310.0 589.6,309.2" fill="#7c7f2a" fill-opacity="0.95"/>
<polygon points="577.0,281.2 590.8,281.8 591.0,284.6 577.4,284.0" fill="#7c7f2a" fill-opacity="0.8"/>
<polygon points="263.4,181.4 262.2,187.6 264.2,193.6 265.4,187.4" fill="#5a5a4e" fill-opacity="1"/>
<path d="M263.4 181.4L262.2 187.6" stroke="#15150c" stroke-width="0.9" fill="none"/>
<path d="M264.4 184.4L263.2 190.6" stroke="#2a2a20" stroke-width="0.7" fill="none"/>
<path d="M265.4 187.4L264.2 193.6" stroke="#0e0e08" stroke-width="1.0" fill="none"/>
<path d="M263.9 182.9L262.7 189.1" stroke="#a4a48c" stroke-opacity="0.75" stroke-width="0.6" fill="none"/>
<path d="M264.9 185.9L263.7 192.1" stroke="#a4a48c" stroke-opacity="0.75" stroke-width="0.6" fill="none"/>
<polygon points="335.5,182.7 335.0,189.0 337.0,195.0 337.5,188.7" fill="#5a5a4e" fill-opacity="1"/>
<path d="M335.5 182.7L335.0 189.0" stroke="#15150c" stroke-width="0.9" fill="none"/>
<path d="M336.5 185.7L336.0 192.0" stroke="#2a2a20" stroke-width="0.7" fill="none"/>
<path d="M337.5 188.7L337.0 195.0" stroke="#0e0e08" stroke-width="1.0" fill="none"/>
<path d="M336.0 184.2L335.5 190.5" stroke="#a4a48c" stroke-opacity="0.75" stroke-width="0.6" fill="none"/>
<path d="M337.0 187.2L336.5 193.5" stroke="#a4a48c" stroke-opacity="0.75" stroke-width="0.6" fill="none"/>
<polygon points="617.8,212.9 639.2,318.2 641.2,324.2 619.8,218.9" fill="#5a5a4e" fill-opacity="1"/>
<path d="M617.8 212.9L639.2 318.2" stroke="#15150c" stroke-width="0.9" fill="none"/>
<path d="M618.8 215.9L640.2 321.2" stroke="#2a2a20" stroke-width="0.7" fill="none"/>
<path d="M619.8 218.9L641.2 324.2" stroke="#0e0e08" stroke-width="1.0" fill="none"/>
<path d="M618.3 214.4L639.7 319.7" stroke="#a4a48c" stroke-opacity="0.75" stroke-width="0.6" fill="none"/>
<path d="M619.3 217.4L640.7 322.7" stroke="#a4a48c" stroke-opacity="0.75" stroke-width="0.6" fill="none"/>
<polygon points="639.2,318.2 388.5,355.6 390.5,361.6 641.2,324.2" fill="#5a5a4e" fill-opacity="0.82"/>
<path d="M639.2 318.2L388.5 355.6" stroke="#15150c" stroke-width="0.9" fill="none"/>
<path d="M640.2 321.2L389.5 358.6" stroke="#2a2a20" stroke-width="0.7" fill="none"/>
<path d="M641.2 324.2L390.5 361.6" stroke="#0e0e08" stroke-width="1.0" fill="none"/>
<path d="M639.7 319.7L389.0 357.1" stroke="#a4a48c" stroke-opacity="0.75" stroke-width="0.6" fill="none"/>
<path d="M640.7 322.7L390.0 360.1" stroke="#a4a48c" stroke-opacity="0.75" stroke-width="0.6" fill="none"/>
<polygon points="388.5,355.6 341.9,354.5 343.9,360.5 390.5,361.6" fill="#5a5a4e" fill-opacity="1"/>
<path d="M388.5 355.6L341.9 354.5" stroke="#15150c" stroke-width="0.9" fill="none"/>
<path d="M389.5 358.6L342.9 357.5" stroke="#2a2a20" stroke-width="0.7" fill="none"/>
<path d="M390.5 361.6L343.9 360.5" stroke="#0e0e08" stroke-width="1.0" fill="none"/>
<path d="M389.0 357.1L342.4 356.0" stroke="#a4a48c" stroke-opacity="0.75" stroke-width="0.6" fill="none"/>
<path d="M390.0 360.1L343.4 359.0" stroke="#a4a48c" stroke-opacity="0.75" stroke-width="0.6" fill="none"/>
<polygon points="342.7,343.4 298.8,343.1 300.8,349.1 344.7,349.4" fill="#5a5a4e" fill-opacity="1"/>
<path d="M342.7 343.4L298.8 343.1" stroke="#15150c" stroke-width="0.9" fill="none"/>
<path d="M343.7 346.4L299.8 346.1" stroke="#2a2a20" stroke-width="0.7" fill="none"/>
<path d="M344.7 349.4L300.8 349.1" stroke="#0e0e08" stroke-width="1.0" fill="none"/>
<path d="M343.2 344.9L299.3 344.6" stroke="#a4a48c" stroke-opacity="0.75" stroke-width="0.6" fill="none"/>
<path d="M344.2 347.9L300.3 347.6" stroke="#a4a48c" stroke-opacity="0.75" stroke-width="0.6" fill="none"/>
<polygon points="298.8,343.1 297.9,353.6 299.9,359.6 300.8,349.1" fill="#5a5a4e" fill-opacity="1"/>
<path d="M298.8 343.1L297.9 353.6" stroke="#15150c" stroke-width="0.9" fill="none"/>
<path d="M299.8 346.1L298.9 356.6" stroke="#2a2a20" stroke-width="0.7" fill="none"/>
<path d="M300.8 349.1L299.9 359.6" stroke="#0e0e08" stroke-width="1.0" fill="none"/>
<path d="M299.3 344.6L298.4 355.1" stroke="#a4a48c" stroke-opacity="0.75" stroke-width="0.6" fill="none"/>
<path d="M300.3 347.6L299.4 358.1" stroke="#a4a48c" stroke-opacity="0.75" stroke-width="0.6" fill="none"/>
<polygon points="297.9,353.6 248.2,352.7 250.2,358.7 299.9,359.6" fill="#5a5a4e" fill-opacity="1"/>
<path d="M297.9 353.6L248.2 352.7" stroke="#15150c" stroke-width="0.9" fill="none"/>
<path d="M298.9 356.6L249.2 355.7" stroke="#2a2a20" stroke-width="0.7" fill="none"/>
<path d="M299.9 359.6L250.2 358.7" stroke="#0e0e08" stroke-width="1.0" fill="none"/>
<path d="M298.4 355.1L248.7 354.2" stroke="#a4a48c" stroke-opacity="0.75" stroke-width="0.6" fill="none"/>
<path d="M299.4 358.1L249.7 357.2" stroke="#a4a48c" stroke-opacity="0.75" stroke-width="0.6" fill="none"/>
<polygon points="250.0,342.2 207.8,341.7 209.8,347.7 252.0,348.2" fill="#5a5a4e" fill-opacity="1"/>
<path d="M250.0 342.2L207.8 341.7" stroke="#15150c" stroke-width="0.9" fill="none"/>
<path d="M251.0 345.2L208.8 344.7" stroke="#2a2a20" stroke-width="0.7" fill="none"/>
<path d="M252.0 348.2L209.8 347.7" stroke="#0e0e08" stroke-width="1.0" fill="none"/>
<path d="M250.5 343.7L208.3 343.2" stroke="#a4a48c" stroke-opacity="0.75" stroke-width="0.6" fill="none"/>
<path d="M251.5 346.7L209.3 346.2" stroke="#a4a48c" stroke-opacity="0.75" stroke-width="0.6" fill="none"/>
<polygon points="207.8,341.7 206.0,351.9 208.0,357.9 209.8,347.7" fill="#5a5a4e" fill-opacity="1"/>
<path d="M207.8 341.7L206.0 351.9" stroke="#15150c" stroke-width="0.9" fill="none"/>
<path d="M208.8 344.7L207.0 354.9" stroke="#2a2a20" stroke-width="0.7" fill="none"/>
<path d="M209.8 347.7L208.0 357.9" stroke="#0e0e08" stroke-width="1.0" fill="none"/>
<path d="M208.3 343.2L206.5 353.4" stroke="#a4a48c" stroke-opacity="0.75" stroke-width="0.6" fill="none"/>
<path d="M209.3 346.2L207.5 356.4" stroke="#a4a48c" stroke-opacity="0.75" stroke-width="0.6" fill="none"/>
<polygon points="206.0,351.9 183.2,351.9 185.2,357.9 208.0,357.9" fill="#5a5a4e" fill-opacity="1"/>
<path d="M206.0 351.9L183.2 351.9" stroke="#15150c" stroke-width="0.9" fill="none"/>
<path d="M207.0 354.9L184.2 354.9" stroke="#2a2a20" stroke-width="0.7" fill="none"/>
<path d="M208.0 357.9L185.2 357.9" stroke="#0e0e08" stroke-width="1.0" fill="none"/>
<path d="M206.5 353.4L183.7 353.4" stroke="#a4a48c" stroke-opacity="0.75" stroke-width="0.6" fill="none"/>
<path d="M207.5 356.4L184.7 356.4" stroke="#a4a48c" stroke-opacity="0.75" stroke-width="0.6" fill="none"/>
<polygon points="247.2,181.4 263.4,181.4 262.2,187.6 296.9,187.9 297.6,182.0 335.5,182.7 335.0,189.0 369.6,189.7 370.0,182.6 406.6,182.6 617.8,212.9 639.2,318.2 388.5,355.6 341.9,354.5 342.7,343.4 298.8,343.1 297.9,353.6 248.2,352.7 250.0,342.2 207.8,341.7 206.0,351.9 183.2,351.9" fill="none" stroke="#54541c" stroke-width="0.6" stroke-opacity="0.8"/>
<path d="M247.6 181.6L183.8 351.7" stroke="#1e1e0c" stroke-width="2.0" fill="none"/>
<polygon points="617.4,212.8 619.2,213.0 641.9,317.6 641.6,323.8 639.6,323.4 638.6,317.6" fill="#0b0b06"/>
<polygon points="254.2,200.1 262.1,200.2 262.1,204.4 261.7,204.4 253.5,231.4 247.8,231.0 256.0,204.4 254.8,204.4" fill="#3a3a34" stroke="#101008" stroke-width="0.9" stroke-linejoin="round"/>
<path d="M259.2 205.9L251.1 229.9" stroke="#77776c" stroke-width="1.6"/>
<path d="M256.0 203.9L247.8 231.4" stroke="#0c0c06" stroke-width="1.3"/>
<polygon points="224.4,282.6 232.8,282.7 232.8,288.9 233.5,288.9 221.9,323.8 215.0,323.4 226.7,288.9 225.0,288.9" fill="#3a3a34" stroke="#101008" stroke-width="0.9" stroke-linejoin="round"/>
<path d="M230.5 290.4L218.8 322.3" stroke="#77776c" stroke-width="1.6"/>
<path d="M226.7 288.4L215.0 323.8" stroke="#0c0c06" stroke-width="1.3"/>
<polygon points="573.0,223.0 594.6,224.2 595.0,229.6 573.6,228.4" fill="#80805c" />
<path d="M573.0 223.0L594.6 224.2" stroke="#2a2a1e" stroke-width="0.6" stroke-opacity="0.85"/>
<path d="M573.2 224.8L594.7 226.0" stroke="#2a2a1e" stroke-width="0.6" stroke-opacity="0.85"/>
<path d="M573.4 226.6L594.9 227.8" stroke="#2a2a1e" stroke-width="0.6" stroke-opacity="0.85"/>
<path d="M573.6 228.4L595.0 229.6" stroke="#2a2a1e" stroke-width="0.6" stroke-opacity="0.85"/>
<polygon points="573.4,229.0 579.4,229.3 582.0,244.4 575.6,244.2" fill="#e9e9e4" />
<path d="M572.9 227.5L575.7 244.2" stroke="#0c0c06" stroke-width="2.5"/>
<path d="M578.3 228.6L581.0 244.3" stroke="#0c0c06" stroke-width="2.3"/>
<path d="M571.2 221.6L572.6 230.8" stroke="#15150a" stroke-width="3.2"/>
<path d="M595.6 221.8L596.6 236.0" stroke="#15150a" stroke-width="2.6"/>
<polygon points="576.6,277.2 590.4,277.8 590.6,281.2 577.0,280.6" fill="#2a2a1c" />
<polygon points="588.6,298.2 609.6,299.2 610.0,304.2 589.2,303.2" fill="#80805c" />
<path d="M588.6 298.2L609.6 299.2" stroke="#2a2a1e" stroke-width="0.6" stroke-opacity="0.85"/>
<path d="M588.8 299.8L609.7 300.8" stroke="#2a2a1e" stroke-width="0.6" stroke-opacity="0.85"/>
<path d="M589.0 301.5L609.9 302.5" stroke="#2a2a1e" stroke-width="0.6" stroke-opacity="0.85"/>
<path d="M589.2 303.2L610.0 304.2" stroke="#2a2a1e" stroke-width="0.6" stroke-opacity="0.85"/>
<polygon points="581.4,281.0 588.0,281.2 590.4,303.0 586.0,303.4" fill="#e9e9e4" />
<path d="M581.4 279.5L586.6 304.2" stroke="#0c0c06" stroke-width="2.8"/>
<path d="M587.4 279.8L590.0 302.6" stroke="#0c0c06" stroke-width="2.4"/>
<path d="M585.4 302.6L590.4 303.0" stroke="#0c0c06" stroke-width="1.6"/>
<path d="M610.2 295.4L611.6 311.0" stroke="#15150a" stroke-width="3.0"/>
<path d="M263.6 181.6L262.4 193.8" stroke="#1a1a08" stroke-width="1.5"/>
<path d="M296.8 182.2L297.0 194.0" stroke="#1a1a08" stroke-width="1.5"/>
<path d="M335.6 182.9L335.2 195.4" stroke="#1a1a08" stroke-width="1.5"/>
<path d="M369.8 182.8L369.8 195.8" stroke="#1a1a08" stroke-width="1.5"/>
<path d="M207.0 341.9L208.4 358.0" stroke="#101008" stroke-width="1.4"/>
<path d="M249.6 342.4L250.4 358.8" stroke="#101008" stroke-width="1.4"/>
<path d="M298.6 343.2L300.2 359.6" stroke="#101008" stroke-width="1.4"/>
<path d="M342.4 343.6L344.0 360.4" stroke="#101008" stroke-width="1.4"/>
<path d="M517.6 258.0l1.4 4.2" stroke="#9a9a66" stroke-width="0.7"/>
<path d="M529.3 258.0l1.4 4.2" stroke="#9a9a66" stroke-width="0.7"/>
<path d="M579.0 260.5l1.4 4.2" stroke="#9a9a66" stroke-width="0.7"/>
<path d="M593.8 260.5l1.4 4.2" stroke="#9a9a66" stroke-width="0.7"/>
<path d="M276.0 345.5l1.4 4.2" stroke="#9a9a66" stroke-width="0.7"/>
<path d="M241.5 256.5l1.4 4.2" stroke="#5c5c2a" stroke-width="0.7"/>
<path d="M318.0 192.5l1.4 4.2" stroke="#5c5c2a" stroke-width="0.7"/>
<path d="M414.8 336.2V346.6L417.3 344.3L419.2 348.4L420.7 347.7L418.9 343.7H422.2Z" fill="#fff" stroke="#222" stroke-width="0.8"/>
</svg>
<!-- Kiri:Moto label -->
<div class="abs" style="left:389px;top:0;width:131.5px;height:15px;background:#c0dcf2;border-radius:0 0 2px 2px;"></div>
<div class="abs" style="left:395.60px;top:2.32px;font-size:9.80px;line-height:11.76px;font-weight:bold;color:#2c3a46;white-space:nowrap;transform:scaleX(1.0651);transform-origin:0 0;">Kiri:Moto</div>
<div class="abs" style="left:445.00px;top:2.32px;font-size:9.80px;line-height:11.76px;font-weight:normal;color:#71879a;white-space:nowrap;transform:scaleX(1.0136);transform-origin:0 0;">by</div>
<div class="abs" style="left:459.30px;top:2.32px;font-size:9.80px;line-height:11.76px;font-weight:bold;color:#2c3a46;white-space:nowrap;transform:scaleX(1.0728);transform-origin:0 0;">Grid.Space</div>
<!-- left panel -->
<div class="abs panel" style="left:0;top:0;width:79.3px;height:395px;"></div>
<div class="hd" style="left:4px;top:7px;width:71.5px;"><span class="sx" style="transform:scaleX(0.94)">MODE</span></div>
<div class="bt" style="left:4px;top:22.5px;width:71.5px;"><span class="sx" style="transform:scaleX(0.964)">FDM Printing</span></div>
<div class="bt" style="left:4px;top:36.6px;width:71.5px;"><span class="sx" style="transform:scaleX(0.964)">Laser Cutting</span></div>
<div class="bt sel" style="left:4px;top:50.7px;width:71.5px;"><span class="sx" style="transform:scaleX(0.964)"><b>CNC Milling</b></span></div>
<div class="hd" style="left:4px;top:66px;width:71.5px;"><span class="sx" style="transform:scaleX(0.94)">SETUP</span></div>
<div class="bt" style="left:4px;top:81.8px;width:71.5px;"><span class="sx" style="transform:scaleX(0.964)">D<u>e</u>vices</span></div>
<div class="bt" style="left:4px;top:95.9px;width:71.5px;"><span class="sx" style="transform:scaleX(0.964)">T<u>o</u>ols</span></div>
<div class="bt" style="left:4px;top:110px;width:71.5px;"><span class="sx" style="transform:scaleX(0.964)">Help</span></div>
<div class="hd" style="left:4px;top:125.5px;width:71.5px;"><span class="sx" style="transform:scaleX(0.94)">FUNCTION</span></div>
<div class="bt" style="left:4px;top:141.3px;width:45px;"><span class="sx" style="transform:scaleX(0.964)">Import</span></div>
<div class="bt" style="left:51px;top:141.3px;width:24.5px;"><span class="sx" style="transform:scaleX(0.964)">+</span></div>
<div class="bt" style="left:4px;top:155.4px;width:73px;"><span class="sx" style="transform:scaleX(0.964)"><u>A</u>rrange</span></div>
<div class="bt sel" style="left:4px;top:169.5px;width:71.5px;"><span class="sx" style="transform:scaleX(0.964)"><b><u>S</u>lice</b></span></div>
<div class="bt" style="left:4px;top:183.6px;width:73px;"><span class="sx" style="transform:scaleX(0.964)"><u>P</u>review</span></div>
<div class="bt" style="left:4px;top:197.7px;width:71.5px;"><span class="sx" style="transform:scaleX(0.964)">E<u>x</u>port</span></div>
<div class="hd" style="left:4px;top:213px;width:71.5px;"><span class="sx" style="transform:scaleX(0.94)">PLATFORM</span></div>
<div class="bt" style="left:4px;top:228.8px;width:71.5px;"><span class="sx" style="transform:scaleX(0.964)">Clear</span></div>
<div class="hd" style="left:4px;top:244.2px;width:71.5px;"><span class="sx" style="transform:scaleX(0.94)">VIEW</span></div>
<div class="bt" style="left:4px;top:260px;width:35px;"><span class="sx" style="transform:scaleX(0.964)">home</span></div>
<div class="bt" style="left:40.5px;top:260px;width:35px;"><span class="sx" style="transform:scaleX(0.964)">reset</span></div>
<div class="bt" style="left:4px;top:273.9px;width:35px;"><span class="sx" style="transform:scaleX(0.964)">top</span></div>
<div class="bt" style="left:40.5px;top:273.9px;width:35px;"><span class="sx" style="transform:scaleX(0.964)">front</span></div>
<div class="bt" style="left:4px;top:287.8px;width:35px;"><span class="sx" style="transform:scaleX(0.964)">left</span></div>
<div class="bt" style="left:40.5px;top:287.8px;width:35px;"><span class="sx" style="transform:scaleX(0.964)">right</span></div>
<div class="abs" style="left:6px;top:306px;width:7px;height:7px;background:#f4f4f4;border-radius:1px;"></div>
<svg class="abs" style="left:6px;top:306px" width="7" height="7"><path d="M1.3 3.6L2.9 5.3L5.8 1.5" fill="none" stroke="#111" stroke-width="1.1"/></svg>
<div class="abs" style="left:18px;top:308.5px;width:56px;height:2.5px;background:#dcdcdc;border-radius:1px;"></div>
<div class="abs" style="left:30.8px;top:302.8px;width:6.8px;height:13.6px;background:#ececec;border:0.8px solid #b5b5b5;box-sizing:border-box;border-radius:1.2px;"></div>
<div class="abs" style="left:32.8px;top:307.5px;width:2.8px;height:0.6px;background:#aaa;box-shadow:0 1.6px 0 #aaa,0 3.2px 0 #aaa;"></div>
<!-- right panel -->
<div class="abs panel" style="left:809.2px;top:0;width:100.8px;height:395px;"></div>
<div class="hd" style="left:813px;top:7.1px;width:94px;"><span class="sx" style="transform:scaleX(0.94)">SETTINGS</span></div>
<div class="bt" style="left:813px;top:22.6px;width:46px;"><span class="sx" style="transform:scaleX(0.964)">load</span></div>
<div class="bt" style="left:860.3px;top:22.6px;width:46.5px;"><span class="sx" style="transform:scaleX(0.964)">save</span></div>
<div class="hd" style="left:813px;top:38.2px;width:94px;"><span class="sx" style="transform:scaleX(0.94)">ROUGHING</span></div>
<div class="lb" style="top:52.9px;">tool</div>
<div class="sl" style="top:54.2px;">end 1/4<span style="position:absolute;right:3.2px;top:3.4px;width:0;height:0;border-left:2.3px solid transparent;border-right:2.3px solid transparent;border-top:3.8px solid #111;"></span></div>
<div class="lb" style="top:66.2px;">step over</div>
<div class="in" style="top:66.8px;">0.5</div>
<div class="lb" style="top:80.6px;">step down</div>
<div class="in" style="top:81.1px;">2</div>
<div class="lb" style="top:95px;">feed rate</div>
<div class="in" style="top:95.25px;">1000</div>
<div class="lb" style="top:109.8px;">plunge rate</div>
<div class="in" style="top:110.15px;">250</div>
<div class="lb" style="top:124.3px;">leave stock</div>
<div class="in" style="top:125.15px;">0</div>
<div class="lb" style="top:138.8px;">enable</div>
<div class="cb" style="top:141.8px;"></div>
<div class="hd" style="left:813px;top:153.5px;width:94px;"><span class="sx" style="transform:scaleX(0.94)">FINISHING</span></div>
<div class="lb" style="top:167.5px;">tool</div>
<div class="sl" style="top:168.8px;">end 1/4<span style="position:absolute;right:3.2px;top:3.4px;width:0;height:0;border-left:2.3px solid transparent;border-right:2.3px solid transparent;border-top:3.8px solid #111;"></span></div>
<div class="lb" style="top:180.7px;">step over</div>
<div class="in" style="top:181.45px;">0.5</div>
<div class="lb" style="top:194.9px;">step down</div>
<div class="in" style="top:196.05px;">3</div>
<div class="lb" style="top:209.5px;">max angle</div>
<div class="in" style="top:210.55px;">85</div>
<div class="lb" style="top:224.1px;">feed rate</div>
<div class="in" style="top:225.15px;">850</div>
<div class="lb" style="top:239px;">plunge rate</div>
<div class="in" style="top:239.55px;">250</div>
<div class="lb" style="top:253.6px;">waterline</div>
<div class="cb" style="top:256.3px;"></div><svg class="abs" style="left:897px;top:256.3px" width="7.4" height="7.4" viewBox="0 0 7 7"><path d="M1.2 3.6L2.9 5.4L5.9 1.3" fill="none" stroke="#111" stroke-width="1.2"/></svg>
<div class="lb" style="top:264.9px;">linear x</div>
<div class="cb" style="top:267.4px;"></div>
<div class="lb" style="top:276.4px;">linear y</div>
<div class="cb" style="top:278.7px;"></div>
<div class="lb" style="top:287.8px;">curves only</div>
<div class="cb" style="top:290.2px;"></div>
<div class="hd" style="left:813px;top:301.9px;width:94px;"><span class="sx" style="transform:scaleX(0.94)">DRILLING</span></div>
<div class="lb" style="top:316.1px;">tool</div>
<div class="sl" style="top:317.4px;">end 1/4<span style="position:absolute;right:3.2px;top:3.4px;width:0;height:0;border-left:2.3px solid transparent;border-right:2.3px solid transparent;border-top:3.8px solid #111;"></span></div>
<div class="lb" style="top:329.6px;">plunge per</div>
<div class="in" style="top:329.95px;">5</div>
<div class="lb" style="top:343.8px;">plunge rate</div>
<div class="in" style="top:344.45px;">250</div>
<div class="lb" style="top:358.2px;">dwell time</div>
<div class="in" style="top:359.05px;">250</div>
<div class="lb" style="top:372.7px;">drill lift</div>
<div class="in" style="top:373.85px;">2</div>
<div class="lb" style="top:387px;">enable</div>
<div class="cb" style="top:390.7px;"></div>
<!-- bottom slider bar -->
<div class="abs" style="left:140px;top:379.5px;width:630px;height:15.5px;background:#b2d8f4;opacity:0.93;border-radius:2px;"></div>
<div class="abs" style="left:147px;top:382px;width:30px;height:11px;background:#b4c7d6;border-radius:2px;font-size:9px;line-height:11px;text-align:center;color:#2f3b45;">layers</div>
<div class="abs" style="left:182px;top:381px;width:40px;height:13px;background:#fff;border:1px solid #9fc3dc;box-sizing:border-box;font-size:9px;line-height:11px;color:#222;padding-left:2px;">3</div>
<div class="abs" style="left:224px;top:386.3px;width:449px;height:2.4px;background:#c6e2f6;border-radius:1px;"></div>
<div class="abs" style="left:673px;top:381px;width:7px;height:13px;background:#e6e6e6;border:0.8px solid #a8a8a8;box-sizing:border-box;border-radius:1.2px;"></div>
<div class="abs" style="left:686px;top:382px;width:34px;height:11px;background:#b4c7d6;border-radius:2px;font-size:9px;line-height:11px;text-align:center;color:#2f3b45;">section</div>
<div class="abs" style="left:724px;top:381px;width:40px;height:13px;background:#fff;border:1px solid #9fc3dc;box-sizing:border-box;font-size:9px;line-height:11px;color:#222;padding-left:2px;">1</div>
</div>

<div class="abs" style="left:0;top:70px;width:910px;height:0.6px;background:#fcfcfc;"></div>
<!-- ================= ONSHAPE TAB BAR ================= -->
<div id="ostabs" class="abs"></div>
<div class="ot" style="left:51px;width:69.7px;"></div>
<svg class="abs" style="left:56.2px;top:468px" width="16" height="14" viewBox="0 0 16 14"><rect x="1.9" y="4.6" width="5.6" height="7.0" rx="1.3" fill="#fbfbfb" stroke="#343434" stroke-width="1.35"/><rect x="7.5" y="1.5" width="5.9" height="10.1" rx="1.4" fill="#fbfbfb" stroke="#343434" stroke-width="1.35"/></svg>
<div class="abs" style="left:73.20px;top:467.82px;font-size:11.50px;line-height:13.80px;font-weight:normal;color:#808080;white-space:nowrap;transform:scaleX(0.8074);transform-origin:0 0;">Lower Part</div>
<div class="ot" style="left:122.6px;width:46.4px;"></div>
<svg class="abs" style="left:128.4px;top:468px" width="16" height="14" viewBox="0 0 16 14"><rect x="1.9" y="4.6" width="5.6" height="7.0" rx="1.3" fill="#fbfbfb" stroke="#343434" stroke-width="1.35"/><rect x="7.5" y="1.5" width="5.9" height="10.1" rx="1.4" fill="#fbfbfb" stroke="#343434" stroke-width="1.35"/></svg>
<div class="abs" style="left:145.00px;top:467.82px;font-size:11.50px;line-height:13.80px;font-weight:normal;color:#808080;white-space:nowrap;transform:scaleX(0.7590);transform-origin:0 0;">Base</div>
<div class="ot" style="left:170.5px;width:68.5px;"></div>
<svg class="abs" style="left:175.8px;top:468px" width="16" height="14" viewBox="0 0 16 14"><rect x="1.9" y="4.6" width="5.6" height="7.0" rx="1.3" fill="#fbfbfb" stroke="#343434" stroke-width="1.35"/><rect x="7.5" y="1.5" width="5.9" height="10.1" rx="1.4" fill="#fbfbfb" stroke="#343434" stroke-width="1.35"/></svg>
<div class="abs" style="left:192.00px;top:467.82px;font-size:11.50px;line-height:13.80px;font-weight:normal;color:#808080;white-space:nowrap;transform:scaleX(0.8041);transform-origin:0 0;">Upper part</div>
<div class="ot" style="left:241.7px;width:62.3px;"></div>
<svg class="abs" style="left:246.8px;top:468px" width="15" height="14" viewBox="0 0 15 14"><path d="M2 3.5H11.5V12H2Z" fill="#9a9a9a" stroke="#3a3a3a" stroke-width="1.2"/><path d="M3.5 2H13V10.5" fill="none" stroke="#3a3a3a" stroke-width="1.1"/></svg>
<div class="abs" style="left:262.80px;top:467.82px;font-size:11.50px;line-height:13.80px;font-weight:normal;color:#808080;white-space:nowrap;transform:scaleX(0.7470);transform-origin:0 0;">Sawhorse</div>
<div class="ot" style="left:308.5px;width:62px;background:#fff;border-bottom:1.5px solid #1b5faa;height:18.2px;"></div>
<svg class="abs" style="left:314px;top:468px" width="15" height="14" viewBox="0 0 15 14"><path d="M3 1.5H8.5L11.5 4.5V12.5H3Z" fill="#fff" stroke="#3a3a3a" stroke-width="1.1"/><path d="M8.5 1.5V4.5H11.5" fill="none" stroke="#3a3a3a" stroke-width="1"/></svg>
<div class="abs" style="left:330.00px;top:467.82px;font-size:11.50px;line-height:13.80px;font-weight:normal;color:#5a5a5a;white-space:nowrap;transform:scaleX(0.8154);transform-origin:0 0;">Kiri:Moto</div>
<div class="ot" style="left:373px;width:65px;"></div>
<svg class="abs" style="left:377.8px;top:468px" width="15" height="14" viewBox="0 0 15 14"><rect x="1.5" y="2.5" width="11.5" height="9.5" fill="#fff" stroke="#3a3a3a" stroke-width="1.2"/><path d="M8.5 12V8.5H13" fill="none" stroke="#3a3a3a" stroke-width="1.1"/></svg>
<div class="abs" style="left:393.70px;top:467.82px;font-size:11.50px;line-height:13.80px;font-weight:normal;color:#808080;white-space:nowrap;transform:scaleX(0.7899);transform-origin:0 0;">Drawing 1</div>
<div class="ot" style="left:440.4px;width:43.6px;"></div>
<svg class="abs" style="left:445.3px;top:468px" width="16" height="14" viewBox="0 0 16 14"><rect x="1.9" y="4.6" width="5.6" height="7.0" rx="1.3" fill="#fbfbfb" stroke="#343434" stroke-width="1.35"/><rect x="7.5" y="1.5" width="5.9" height="10.1" rx="1.4" fill="#fbfbfb" stroke="#343434" stroke-width="1.35"/></svg>
<div class="abs" style="left:461.80px;top:467.82px;font-size:11.50px;line-height:13.80px;font-weight:normal;color:#808080;white-space:nowrap;transform:scaleX(0.7734);transform-origin:0 0;">Feet</div>
<div class="ot" style="left:485.7px;width:85.8px;"></div>
<svg class="abs" style="left:490.3px;top:468px" width="16" height="14" viewBox="0 0 16 14"><rect x="1.9" y="4.6" width="5.6" height="7.0" rx="1.3" fill="#fbfbfb" stroke="#343434" stroke-width="1.35"/><rect x="7.5" y="1.5" width="5.9" height="10.1" rx="1.4" fill="#fbfbfb" stroke="#343434" stroke-width="1.35"/></svg>
<div class="abs" style="left:506.80px;top:467.82px;font-size:11.50px;line-height:13.80px;font-weight:normal;color:#808080;white-space:nowrap;transform:scaleX(0.7846);transform-origin:0 0;">Lower box side</div>
<div class="ot" style="left:574.3px;width:109.7px;"></div>
<svg class="abs" style="left:578.2px;top:468px" width="16" height="14" viewBox="0 0 16 14"><rect x="1.9" y="4.6" width="5.6" height="7.0" rx="1.3" fill="#fbfbfb" stroke="#343434" stroke-width="1.35"/><rect x="7.5" y="1.5" width="5.9" height="10.1" rx="1.4" fill="#fbfbfb" stroke="#343434" stroke-width="1.35"/></svg>
<div class="abs" style="left:594.70px;top:467.82px;font-size:11.50px;line-height:13.80px;font-weight:normal;color:#808080;white-space:nowrap;transform:scaleX(0.7848);transform-origin:0 0;">Upper box upper side</div>
<div class="ot" style="left:685.9px;width:111.7px;"></div>
<svg class="abs" style="left:691.5px;top:468px" width="16" height="14" viewBox="0 0 16 14"><rect x="1.9" y="4.6" width="5.6" height="7.0" rx="1.3" fill="#fbfbfb" stroke="#343434" stroke-width="1.35"/><rect x="7.5" y="1.5" width="5.9" height="10.1" rx="1.4" fill="#fbfbfb" stroke="#343434" stroke-width="1.35"/></svg>
<div class="abs" style="left:708.30px;top:467.82px;font-size:11.50px;line-height:13.80px;font-weight:normal;color:#808080;white-space:nowrap;transform:scaleX(0.7887);transform-origin:0 0;">Upper box lower side</div>
<div class="ot" style="left:799.3px;width:84.7px;"></div>
<svg class="abs" style="left:804.8px;top:468px" width="16" height="14" viewBox="0 0 16 14"><rect x="1.9" y="4.6" width="5.6" height="7.0" rx="1.3" fill="#fbfbfb" stroke="#343434" stroke-width="1.35"/><rect x="7.5" y="1.5" width="5.9" height="10.1" rx="1.4" fill="#fbfbfb" stroke="#343434" stroke-width="1.35"/></svg>
<div class="abs" style="left:821.50px;top:467.82px;font-size:11.50px;line-height:13.80px;font-weight:normal;color:#808080;white-space:nowrap;transform:scaleX(0.7779);transform-origin:0 0;">Upper box bot</div>
<div class="abs" style="left:868px;top:465px;width:42px;height:20px;background:linear-gradient(90deg,rgba(222,222,222,0),#dedede 28%);"></div>
<svg class="abs" style="left:0;top:465px" width="910" height="20" viewBox="0 465 910 20"><path d="M6 470.5H17" stroke="#666" stroke-width="1"/><circle cx="10" cy="476" r="2.6" fill="none" stroke="#666" stroke-width="1.1"/><path d="M12 478L14 480M14.5 474.5H17.5M14.5 477.5H17.5" stroke="#666" stroke-width="1.1"/><path d="M30.5 475H40.5M35.5 470V480" stroke="#555" stroke-width="1.4"/><path d="M888 471L884.5 475L888 479" fill="none" stroke="#9a9a9a" stroke-width="1.3"/><path d="M900.5 471L904 475L900.5 479" fill="none" stroke="#444" stroke-width="1.3"/></svg>

<!-- ================= TASKBAR ================= -->
<div id="taskbar" class="abs"></div>
<div class="abs" style="left:32px;top:485px;width:229.3px;height:27px;background:#f1f1f1;"></div>
<div class="abs" style="left:58.90px;top:492.57px;font-size:10.70px;line-height:12.84px;font-weight:normal;color:#3c3c3c;white-space:nowrap;transform:scaleX(0.8955);transform-origin:0 0;">Type here to search</div>
<div class="abs" style="left:360.6px;top:485px;width:31.6px;height:27px;background:#2b393f;"></div>
<div class="abs" style="left:331px;top:510.6px;width:25.6px;height:1.4px;background:#7aa7c9;"></div>
<div class="abs" style="left:360.6px;top:510.6px;width:31.6px;height:1.4px;background:#8fc3ea;"></div>
<svg class="abs" style="left:0;top:485px" width="910" height="27" viewBox="0 485 910 27"><path d="M11 494.2L15.6 493.5V498H11ZM16.4 493.4L22 492.6V498H16.4ZM11 498.8H15.6V503.4L11 502.7ZM16.4 498.8H22V504.3L16.4 503.5Z" fill="#fff"/><circle cx="45" cy="498.5" r="5.5" fill="none" stroke="#222" stroke-width="1.6"/><rect x="246" y="492.5" width="3.4" height="7" rx="1.7" fill="none" stroke="#444" stroke-width="0.9"/><path d="M244.3 497.5Q244.3 501 247.7 501Q251.1 501 251.1 497.5M247.7 501V503.5M245.7 503.5H249.7" fill="none" stroke="#444" stroke-width="0.9"/><rect x="273.5" y="494" width="7" height="8" fill="none" stroke="#fff" stroke-width="1"/><path d="M271 495.5V500.5M283 495.5V500.5" stroke="#fff" stroke-width="1"/><path d="M304 493H309L310 494.5H317V503H304Z" fill="#f7d774"/><rect x="304" y="497" width="13" height="6" fill="#f2c744"/><rect x="307.5" y="499.5" width="6" height="3.5" fill="#5aa9e6"/><rect x="337" y="491" width="14" height="14" fill="#8e949a"/><rect x="338.5" y="492.5" width="11" height="11" fill="#dfe2e5"/><path d="M340.5 495.5H347.5V500.5H343L341.5 502V500.5H340.5Z" fill="#fff"/><circle cx="376.5" cy="498" r="6.5" fill="#db4437"/><path d="M376.5 498L370.9 494.7A6.5 6.5 0 0 0 373.2 503.6Z" fill="#0f9d58"/><path d="M376.5 498L373.2 503.6A6.5 6.5 0 0 0 383 498Z" fill="#ffcd40"/><path d="M376.5 498H383A6.5 6.5 0 0 0 370.9 494.7Z" fill="#db4437"/><circle cx="376.5" cy="498" r="3" fill="#fff"/><circle cx="376.5" cy="498" r="2.3" fill="#4285f4"/><circle cx="734" cy="497.5" r="1.6" fill="none" stroke="#fff" stroke-width="0.9"/><path d="M731 502.5Q731 499.8 734 499.8Q737 499.8 737 502.5" fill="none" stroke="#fff" stroke-width="0.9"/><circle cx="738.5" cy="494.5" r="1.3" fill="none" stroke="#fff" stroke-width="0.8"/><path d="M738 497H741.5V499" fill="none" stroke="#fff" stroke-width="0.8"/><path d="M757 500L760.5 496.5L764 500" fill="none" stroke="#fff" stroke-width="1.1"/><rect x="771.5" y="495.5" width="9" height="5.5" fill="none" stroke="#fff" stroke-width="0.9"/><rect x="772.5" y="496.5" width="5" height="3.5" fill="#fff"/><path d="M781.3 497V499.5" stroke="#fff" stroke-width="1"/><path d="M788 501.5L797 494V501.5Z" fill="#5b656c"/><path d="M803.5 497H805.5L808 494.7V502.3L805.5 500H803.5Z" fill="#fff"/><path d="M809.7 496.3Q811 498.5 809.7 500.7M811.5 494.8Q813.7 498.5 811.5 502.2" fill="none" stroke="#fff" stroke-width="0.8"/><path d="M821 494.5L823.5 496L821 497.5L818.5 496ZM826 494.5L828.5 496L826 497.5L823.5 496ZM821 497.7L823.5 499.2L821 500.7L818.5 499.2ZM826 497.7L828.5 499.2L826 500.7L823.5 499.2ZM823.5 500L825.6 501.3L823.5 502.6L821.4 501.3Z" fill="#fff"/><path d="M878.5 492.5H890.5V501.5H884L881 504V501.5H878.5Z" fill="none" stroke="#fff" stroke-width="1"/><path d="M880.5 495H888.5M880.5 497H888.5M880.5 499H886" stroke="#fff" stroke-width="0.7"/></svg>
<div class="abs" style="left:839.50px;top:487.40px;font-size:9.40px;line-height:11.28px;font-weight:normal;color:#fff;white-space:nowrap;transform:scaleX(0.8018);transform-origin:0 0;">4:15 PM</div>
<div class="abs" style="left:839.50px;top:497.70px;font-size:9.40px;line-height:11.28px;font-weight:normal;color:#c8c8c8;white-space:nowrap;transform:scaleX(0.7945);transform-origin:0 0;">4/7/2018</div>
<div class="abs" style="left:782.00px;top:496.42px;font-size:11.50px;line-height:13.80px;font-weight:bold;color:rgba(0,0,0,0.82);white-space:nowrap;transform:scaleX(1.0237);transform-origin:0 0;">www.mfgrobots.com</div>

</body>
</html>
